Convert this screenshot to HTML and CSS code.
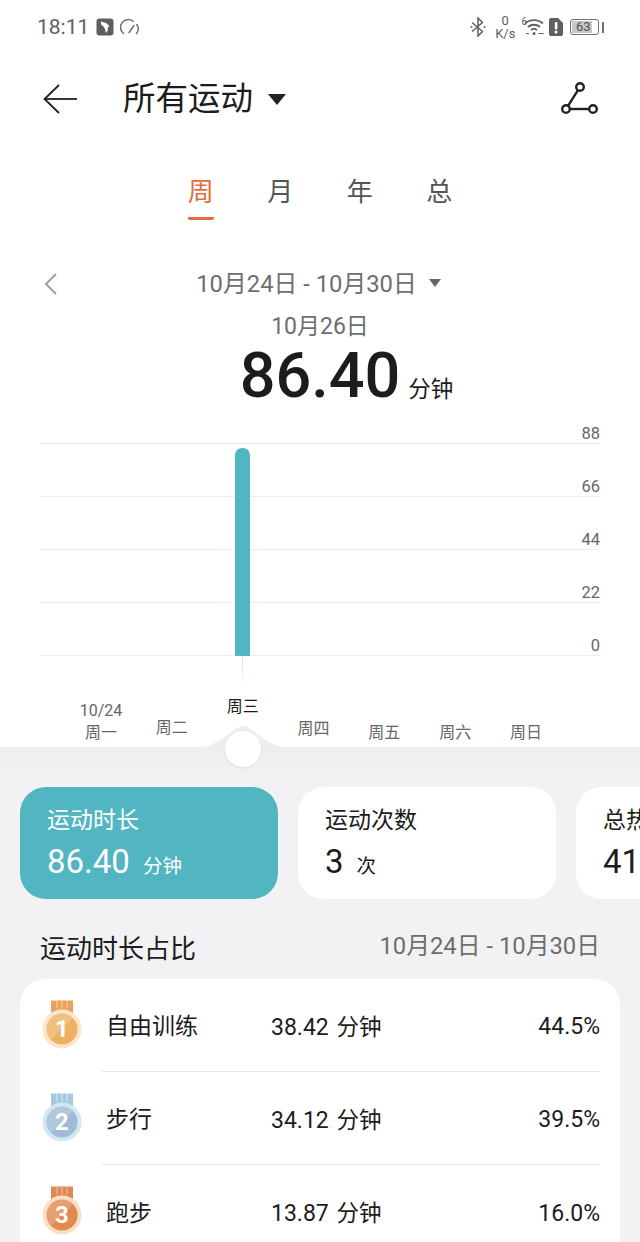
FILE: index.html
```html
<!doctype html>
<html>
	<head>
		<meta charset="utf-8" />
		<meta name="viewport" content="width=device-width, initial-scale=1" />
		<title>所有运动</title>
		<link rel="stylesheet" href="styles.css">
	</head>
	<body>
		<div class="status">
			<div class="status-left">
				<span class="clock">18:11</span>
				<svg width="18" height="18" viewBox="0 0 18 18"><rect x="0.500" y="0.500" width="17" height="17" rx="3" fill="#5f5f5f"/><path d="M5 3.500l5 1.500 3.500 3-1.500 1-.5 4-1.500 2-1-4-1.500-2.500L5 6.500z" fill="#fff"/></svg>
				<svg width="20" height="18" viewBox="0 0 20 18" fill="none" stroke="#707070" stroke-width="1.500" stroke-linecap="round"><path d="M3.500 15.500A7.500 7.500 0 0 1 13 3.200"/><path d="M16.800 6.500a7.500 7.500 0 0 1-.3 9"/><path d="M9 14.500l5-7"/></svg>
			</div>
			<div class="status-right">
				<svg width="16" height="20" viewBox="0 0 16 20" fill="none" stroke="#606060" stroke-width="1.500"><path d="M2 5.500l10.500 9L8 19V1l4.500 4.500L2 14.500"/><circle cx="1.500" cy="10" r="1" fill="#606060" stroke="none"/><circle cx="14.500" cy="10" r="1" fill="#606060" stroke="none"/></svg>
				<span class="speed">0<br>K/s</span>
				<span class="wifi-gen">6</span>
				<svg width="22" height="20" viewBox="0 0 22 20" fill="none" stroke="#606060" stroke-width="1.800"><path d="M2 6.500c5-4.500 13-4.500 18 0"/><path d="M5 10c3.500-3 8.500-3 12 0"/><path d="M8 13c2-1.500 4-1.500 6 0"/><circle cx="11" cy="16.500" r="1.500" fill="#606060" stroke="none"/><path d="M15.500 16.500h5M3 16.500h3" stroke-width="1.200"/></svg>
				<svg width="16" height="20" viewBox="0 0 16 20"><path d="M3 1h7l5 5v11a2 2 0 0 1-2 2H3a2 2 0 0 1-2-2V3a2 2 0 0 1 2-2z" fill="#5f5f5f"/><rect x="6.800" y="5" width="2.600" height="7.500" rx="1" fill="#fff"/><circle cx="8" cy="15" r="1.500" fill="#fff"/></svg>
				<span class="battery"><span class="battery-level">63</span></span>
				<span class="battery-tip"></span>
			</div>
		</div>

		<header class="toolbar">
			<svg class="back" width="34" height="30" viewBox="0 0 34 30" fill="none" stroke="#222" stroke-width="1.800"><path d="M16 1L1.500 15 16 29"/><path d="M2 15h32"/></svg>
			<h1 class="title">所有运动</h1>
			<span class="caret"></span>
			<svg class="share" width="38" height="38" viewBox="0 0 38 38" fill="none" stroke="#222" stroke-width="2.400"><circle cx="20" cy="7" r="3.800"/><circle cx="6" cy="29" r="3.800"/><circle cx="33" cy="29" r="3.800"/><path d="M18 10.200L8 25.800"/><path d="M10 29h19"/></svg>
		</header>

		<nav class="tabs">
			<span class="tab tab-active">周</span>
			<span class="tab">月</span>
			<span class="tab">年</span>
			<span class="tab">总</span>
		</nav>

		<section class="summary">
			<svg class="prev" width="14" height="24" viewBox="0 0 14 24" fill="none" stroke="#a0a0a0" stroke-width="2"><path d="M12 2L2 12l10 10"/></svg>
			<div class="range">10月24日 - 10月30日<span class="range-caret"></span></div>
			<div class="day">10月26日</div>
			<div class="total"><span class="total-num">86.40</span><span class="total-unit">分钟</span></div>
		</section>

		<section class="chart">
			<div class="grid-row"><span>88</span></div>
			<div class="grid-row"><span>66</span></div>
			<div class="grid-row"><span>44</span></div>
			<div class="grid-row"><span>22</span></div>
			<div class="grid-row"><span>0</span></div>
			<div class="bar"></div>
			<div class="bar-tick"></div>
		</section>

		<div class="axis">
			<div class="axis-item first">10/24<br>周一</div>
			<div class="axis-item second">周二</div>
			<div class="axis-item active">周三</div>
			<div class="axis-item fourth">周四</div>
			<div class="axis-item low">周五</div>
			<div class="axis-item low">周六</div>
			<div class="axis-item low">周日</div>
		</div>

		<main class="lower">
			<svg class="bump" width="116" height="23" viewBox="0 0 116 23"><path d="M0 23c22 0 27-3 38-10C46 8 52 1 58 1s12 7 20 12c11 7 16 10 38 10z" fill="#eeeeee"/></svg>
			<div class="knob"></div>

			<div class="cards">
				<div class="card card-on">
					<div class="card-label">运动时长</div>
					<div class="card-value"><b>86.40</b><span>分钟</span></div>
				</div>
				<div class="card">
					<div class="card-label">运动次数</div>
					<div class="card-value"><b>3</b><span>次</span></div>
				</div>
				<div class="card">
					<div class="card-label">总热量</div>
					<div class="card-value"><b>418</b><span>千卡</span></div>
				</div>
			</div>

			<div class="share-head">
				<h2>运动时长占比</h2>
				<span>10月24日 - 10月30日</span>
			</div>

			<div class="rank-list">
				<div class="rank">
					<svg class="medal" width="40" height="48" viewBox="0 0 40 48"><path d="M9-1.500h22v16H9z" fill="#e9a25c"/><path d="M15-1.500v8M20-1.500v8M25-1.500v8" stroke="#f3c48e" stroke-width="1.500"/><circle cx="20" cy="27" r="19.500" fill="#fbe6cc"/><circle cx="20" cy="27" r="15.500" fill="#ecb262"/><path class="medal-shine" d="M9 16a15.500 15.500 0 0 0 0 22L31 16a15.500 15.500 0 0 0-22 0z"/><text x="20" y="35" class="medal-num">1</text></svg>
					<div class="rank-body">
						<span class="rank-name">自由训练</span>
						<span class="rank-time">38.42 <i>分钟</i></span>
						<span class="rank-pct">44.5%</span>
					</div>
				</div>
				<div class="rank">
					<svg class="medal" width="40" height="48" viewBox="0 0 40 48"><path d="M9-1.500h22v16H9z" fill="#a5c8e0"/><path d="M15-1.500v8M20-1.500v8M25-1.500v8" stroke="#c6dfee" stroke-width="1.500"/><circle cx="20" cy="27" r="19.500" fill="#cfe8f2"/><circle cx="20" cy="27" r="15.500" fill="#9fbbd6"/><path class="medal-shine" d="M9 16a15.500 15.500 0 0 0 0 22L31 16a15.500 15.500 0 0 0-22 0z"/><text x="20" y="35" class="medal-num">2</text></svg>
					<div class="rank-body">
						<span class="rank-name">步行</span>
						<span class="rank-time">34.12 <i>分钟</i></span>
						<span class="rank-pct">39.5%</span>
					</div>
				</div>
				<div class="rank">
					<svg class="medal" width="40" height="48" viewBox="0 0 40 48"><path d="M9-1.500h22v16H9z" fill="#df8a56"/><path d="M15-1.500v8M20-1.500v8M25-1.500v8" stroke="#eeb083" stroke-width="1.500"/><circle cx="20" cy="27" r="19.500" fill="#fbdfc4"/><circle cx="20" cy="27" r="15.500" fill="#e08a52"/><path class="medal-shine" d="M9 16a15.500 15.500 0 0 0 0 22L31 16a15.500 15.500 0 0 0-22 0z"/><text x="20" y="35" class="medal-num">3</text></svg>
					<div class="rank-body">
						<span class="rank-name">跑步</span>
						<span class="rank-time">13.87 <i>分钟</i></span>
						<span class="rank-pct">16.0%</span>
					</div>
				</div>
			</div>
		</main>
	</body>
</html>
```

FILE: styles.css
```css
* {
	box-sizing: border-box;
}

html {
	--font-main: Roboto, "Noto Sans CJK SC", sans-serif;
	--color-fg: #1c1c1c;
	--color-muted: #6e6e6e;
	--color-teal: #52b5c2;
	--color-orange: #e0703a;
	--color-bg: #f2f2f4;
}

body {
	font-family: var(--font-main);
	background: #fff;
	color: var(--color-fg);
	margin: 0;
	height: 1242px;
	overflow: hidden;
}

h1,
h2 {
	margin: 0;
	font-weight: 400;
}

.status {
	height: 54px;
	display: flex;
	justify-content: space-between;
	align-items: center;
	padding: 0 36px 0 37px;
}

.status-left,
.status-right {
	display: flex;
	align-items: center;
}

.status-left {
	gap: 6px;
}

.clock {
	font-size: 21px;
	color: #606060;
	margin-right: 1px;
}

.status-right {
	gap: 3px;
}

.speed {
	font-size: 13px;
	line-height: 13px;
	text-align: center;
	color: #606060;
	margin: 0 3px 0 6px;
}

.wifi-gen {
	font-size: 10px;
	line-height: 10px;
	color: #606060;
	margin: -11px -7px 0 0;
}

.battery {
	width: 29px;
	height: 16px;
	border: 1.500px solid #707070;
	border-radius: 3px;
	margin-left: 3px;
	padding: 1px;
	display: flex;
}

.battery-level {
	width: 20px;
	background: #c8c8c8;
	font-size: 13px;
	line-height: 11px;
	color: #505050;
	white-space: nowrap;
	padding-left: 4px;
}

.battery-tip {
	width: 2px;
	height: 11px;
	background: #707070;
}

.toolbar {
	height: 90px;
	display: flex;
	align-items: center;
	padding: 0 42px 0 43px;
}

.title {
	font-size: 32.500px;
	margin-left: 46px;
	line-height: 1;
}

.caret {
	width: 0;
	height: 0;
	border-left: 9px solid transparent;
	border-right: 9px solid transparent;
	border-top: 11px solid #222;
	margin-left: 15px;
}

.share {
	margin-left: auto;
}

.tabs {
	display: flex;
	justify-content: center;
	gap: 53.500px;
	padding-top: 30px;
	height: 106px;
}

.tab {
	font-size: 26px;
	line-height: 36px;
	width: 26px;
	text-align: center;
	color: #555;
	height: 46px;
}

.tab-active {
	color: var(--color-orange);
	border-bottom: 3px solid var(--color-orange);
	border-radius: 0 0 2px 2px;
}

.summary {
	position: relative;
	text-align: center;
	height: 173px;
	padding-top: 20px;
}

.prev {
	position: absolute;
	left: 44px;
	top: 22px;
}

.range {
	font-size: 23.800px;
	line-height: 28px;
	color: var(--color-muted);
	white-space: nowrap;
}

.range-caret {
	display: inline-block;
	width: 0;
	height: 0;
	border-left: 6px solid transparent;
	border-right: 6px solid transparent;
	border-top: 8px solid #666;
	margin-left: 12px;
	margin-right: 3px;
	vertical-align: 5px;
}

.day {
	font-size: 23px;
	line-height: 28px;
	color: var(--color-muted);
	margin-top: 15px;
}

.total {
	line-height: 64px;
	margin-top: 3px;
	display: flex;
	justify-content: center;
	align-items: baseline;
	gap: 8px;
	padding-left: 53px;
}

.total-num {
	font-size: 63px;
	font-weight: 500;
}

.total-unit {
	font-size: 22.500px;
}

.chart {
	position: relative;
	margin: 0 40px;
	width: 560px;
	height: 233px;
}

.grid-row {
	height: 53px;
	border-bottom: 1px solid #eeeeee;
	position: relative;
}

.grid-row:first-child {
	height: 21px;
}

.grid-row span {
	position: absolute;
	right: 0;
	bottom: -1px;
	font-size: 16.500px;
	line-height: 20px;
	color: #666;
}

.bar {
	position: absolute;
	left: 195px;
	top: 25px;
	width: 15px;
	height: 208px;
	background: var(--color-teal);
	border-radius: 7px 7px 0 0;
}

.bar-tick {
	position: absolute;
	left: 202px;
	top: 233px;
	width: 1px;
	height: 34px;
	background: linear-gradient(#bfe6ea, #fff);
}

.axis {
	display: flex;
	height: 91px;
	padding: 0 96px 0 84px;
	justify-content: space-between;
	font-size: 16px;
	line-height: 22px;
	color: #666;
	text-align: center;
}

.axis-item {
	width: 36px;
	white-space: nowrap;
}

.first {
	width: 44px;
	margin: 0 -4px 0 -5px;
	padding-top: 44px;
}

.second {
	padding-top: 61px;
}

.active {
	padding-top: 40px;
	color: #1c1c1c;
}

.fourth {
	padding-top: 62px;
}

.low {
	padding-top: 66px;
}

.lower {
	position: relative;
	background: linear-gradient(#eeeeee, var(--color-bg) 30px);
	height: 495px;
	padding-top: 40px;
}

.bump {
	position: absolute;
	left: 185px;
	top: -22px;
}

.knob {
	position: absolute;
	left: 225px;
	top: -16px;
	width: 36px;
	height: 36px;
	border-radius: 50%;
	background: #fff;
	box-shadow: 0 1px 3px rgba(0, 0, 0, 0.08);
}

.cards {
	display: flex;
	gap: 20px;
	padding-left: 20px;
	overflow: hidden;
}

.card {
	flex: none;
	width: 258px;
	height: 112px;
	background: #fff;
	border-radius: 26px;
	padding: 20px 27px;
}

.card-on {
	background: var(--color-teal);
	color: #fff;
}

.card-label {
	font-size: 23px;
	line-height: 28px;
}

.card-value {
	margin-top: 8px;
	line-height: 38px;
	display: flex;
	align-items: baseline;
	gap: 13px;
}

.card-value b {
	font-size: 33px;
	font-weight: 400;
}

.card-value span {
	font-size: 19.500px;
}

.share-head {
	display: flex;
	justify-content: space-between;
	align-items: center;
	padding: 18px 40px 0;
	height: 80px;
}

.share-head h2 {
	font-size: 26px;
	margin-bottom: 4px;
}

.share-head span {
	font-size: 23.800px;
	color: var(--color-muted);
	margin-bottom: 9px;
}

.rank-list {
	margin: 0 20px;
	background: #fff;
	border-radius: 26px 26px 0 0;
	padding: 0 20px;
}

.rank {
	display: flex;
	align-items: center;
	height: 93px;
}

.medal {
	flex: none;
	margin-left: 2px;
	overflow: visible;
}

.medal-shine {
	fill: #fff;
	opacity: 0.18;
}

.medal-num {
	font-size: 24px;
	font-weight: 700;
	fill: #fff;
	text-anchor: middle;
}

.rank-body {
	flex: 1;
	height: 100%;
	margin-left: 20px;
	display: flex;
	align-items: center;
	font-size: 23px;
	line-height: 30px;
	border-bottom: 1px solid #e4e4e4;
	padding-top: 4px;
}

.rank:last-child .rank-body {
	border-bottom: none;
}

.rank-name {
	width: 169px;
	padding-left: 4px;
}

.rank-time i {
	font-style: normal;
	font-size: 22.500px;
	margin-left: 2px;
}

.rank-pct {
	margin-left: auto;
}
```
